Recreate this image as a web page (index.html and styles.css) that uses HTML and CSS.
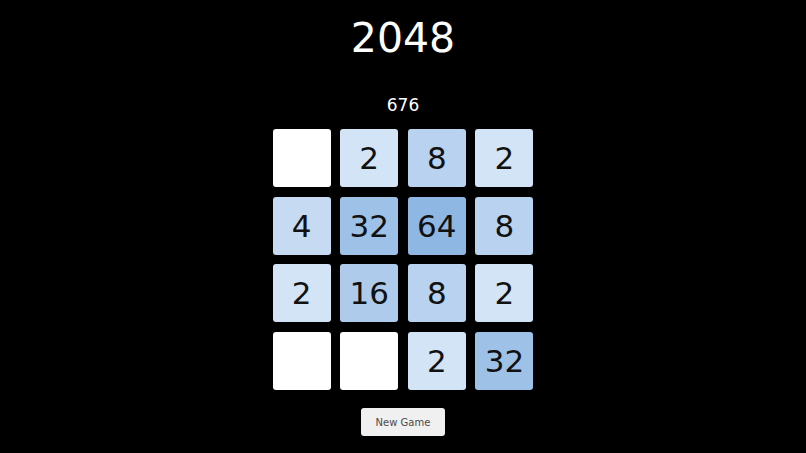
FILE: index.html
```html
<!DOCTYPE html>
<html>
<head>
<meta charset="utf-8">
<link rel="stylesheet" href="styles.css">
</head>
<body>
<main class="game">
  <h1 class="title">2048</h1>
  <div class="score">676</div>
  <div class="board">
    <div class="tile empty"></div>
    <div class="tile v2">2</div>
    <div class="tile v8">8</div>
    <div class="tile v2">2</div>
    <div class="tile v4">4</div>
    <div class="tile v32">32</div>
    <div class="tile v64">64</div>
    <div class="tile v8">8</div>
    <div class="tile v2">2</div>
    <div class="tile v16">16</div>
    <div class="tile v8">8</div>
    <div class="tile v2">2</div>
    <div class="tile empty"></div>
    <div class="tile empty"></div>
    <div class="tile v2">2</div>
    <div class="tile v32">32</div>
  </div>
  <button class="new-game">New Game</button>
</main>
</body>
</html>
```

FILE: styles.css
```css
html, body {
  margin: 0;
  padding: 0;
  background: #000;
  height: 100%;
}
body {
  font-family: "DejaVu Sans", "Liberation Sans", sans-serif;
  color: #fff;
}
.game {
  display: flex;
  flex-direction: column;
  align-items: center;
}
.title {
  margin: 17px 0 0;
  font-size: 41px;
  line-height: 42px;
  font-weight: normal;
}
.score {
  margin-top: 37px;
  font-size: 17px;
  line-height: 18px;
}
.board {
  margin-top: 15px;
  display: grid;
  grid-template-columns: repeat(4, 58px);
  grid-auto-rows: 58px;
  column-gap: 9.6px;
  row-gap: 9.7px;
}
.tile {
  border-radius: 3px;
  display: flex;
  align-items: center;
  justify-content: center;
  color: #111;
  font-size: 31px;
}
.empty { background: #fff; }
.v2 { background: #d3e4f6; }
.v4 { background: #c6daf2; }
.v8 { background: #b8d2ef; }
.v16 { background: #aecbec; }
.v32 { background: #9ec1e8; }
.v64 { background: #8fb7e4; }
.new-game {
  margin-top: 18px;
  width: 84px;
  height: 28px;
  border: none;
  border-radius: 3px;
  background: #f0f0f0;
  color: #4a4a4a;
  font-family: "DejaVu Sans", "Liberation Sans", sans-serif;
  font-size: 10px;
  padding: 0;
}
```
